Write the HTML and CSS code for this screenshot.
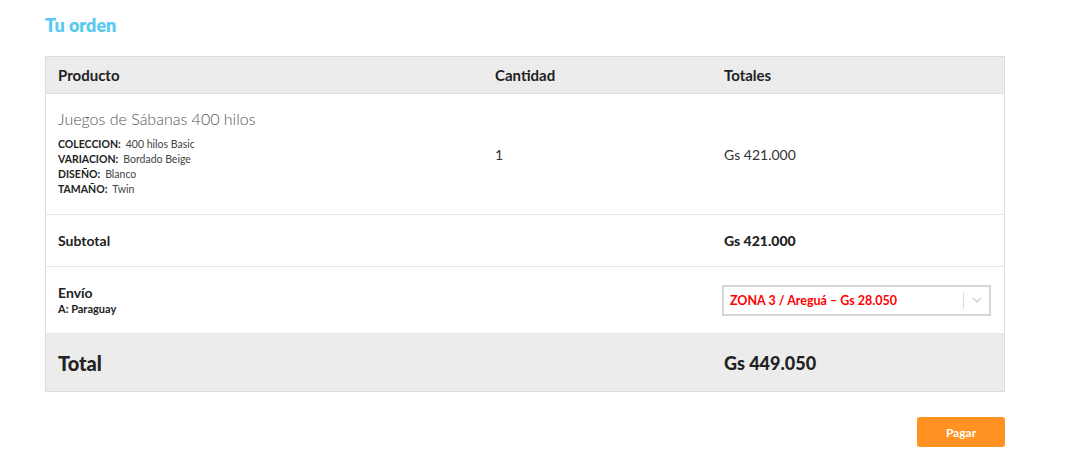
FILE: index.html
```html
<!DOCTYPE html>
<html lang="es">
<head>
  <meta charset="UTF-8">
  <title>Tu orden</title>
  <link rel="stylesheet" href="styles.css">
</head>
<body>
  <div class="order">
    <h3 class="order-title">Tu orden</h3>
    <table class="order-table">
      <thead>
        <tr>
          <th class="col-product">Producto</th>
          <th class="col-qty">Cantidad</th>
          <th class="col-total">Totales</th>
        </tr>
      </thead>
      <tbody>
        <tr class="item-row">
          <td>
            <div class="item-name">Juegos de Sábanas 400 hilos</div>
            <dl class="item-meta">
              <div><dt>COLECCION:</dt> <dd>400 hilos Basic</dd></div>
              <div><dt>VARIACION:</dt> <dd>Bordado Beige</dd></div>
              <div><dt>DISEÑO:</dt> <dd>Blanco</dd></div>
              <div><dt>TAMAÑO:</dt> <dd>Twin</dd></div>
            </dl>
          </td>
          <td>1</td>
          <td>Gs 421.000</td>
        </tr>
        <tr class="subtotal-row">
          <th>Subtotal</th>
          <td></td>
          <td><strong>Gs 421.000</strong></td>
        </tr>
        <tr class="shipping-row">
          <th>
            <div class="ship-label">Envío</div>
            <div class="ship-dest">A: Paraguay</div>
          </th>
          <td></td>
          <td>
            <div class="ship-select">
              <span class="ship-value">ZONA 3 / Areguá – Gs 28.050</span>
              <span class="ship-arrow">
                <svg width="10" height="6" viewBox="0 0 10 6"><path d="M1 1 L5 5 L9 1" fill="none" stroke="#c8c8c8" stroke-width="1.2"/></svg>
              </span>
            </div>
          </td>
        </tr>
      </tbody>
      <tfoot>
        <tr class="total-row">
          <th>Total</th>
          <td></td>
          <td><strong>Gs 449.050</strong></td>
        </tr>
      </tfoot>
    </table>
    <div class="order-actions">
      <button class="pay-btn">Pagar</button>
    </div>
  </div>
</body>
</html>
```

FILE: styles.css
```css
body { margin: 0; font-family: Lato, 'Open Sans', sans-serif; color: #333; background: #fff; }
.order { width: 960px; padding: 14px 0 0 45px; }
.order-title { margin: 0 0 20px; font-size: 18px; font-weight: 800; color: #5bc9ef; line-height: 22px; }
.order-table { width: 960px; border-collapse: collapse; border: 1px solid #dcdcdc; table-layout: fixed; }
.order-table th, .order-table td { text-align: left; padding: 0 12px; vertical-align: middle; }
.order-table thead th { background: #ececec; height: 36px; font-size: 15px; font-weight: 700; color: #222; border-bottom: 1px solid #e2e2e2; }
.col-product { width: 413px; }
.col-qty { width: 205px; }
.order-table tbody tr { border-bottom: 1px solid #e6e6e6; }
.item-row td { font-size: 14px; color: #333; height: 120px; }
.item-name { font-size: 16px; font-weight: 300; color: #555; margin: 0 0 9px; }
.item-meta { margin: 0 0 2px; font-size: 10.5px; line-height: 15px; }
.item-meta div { display: flex; gap: 5px; }
.item-meta dt { font-weight: 700; color: #222; }
.item-meta dd { margin: 0; color: #444; }
.subtotal-row th, .subtotal-row td { height: 51px; font-size: 14px; font-weight: 700; color: #222; }
.shipping-row th, .shipping-row td { height: 66px; }
.ship-label { font-size: 14px; font-weight: 700; color: #222; line-height: 17px; }
.ship-dest { font-size: 11px; font-weight: 700; color: #222; line-height: 15px; }
.ship-select { box-sizing: border-box; width: 269px; height: 31px; margin-left: -2px; border: 2px solid #d6d6d6; display: flex; align-items: center; justify-content: space-between; padding-left: 6px; }
.ship-value { font-size: 12.5px; font-weight: 700; color: #f00; }
.ship-arrow { width: 25px; height: 17px; border-left: 1px solid #dcdcdc; display: flex; align-items: center; justify-content: center; }
.total-row th, .total-row td { background: #ececec; height: 57px; }
.total-row th { font-size: 20px; font-weight: 900; color: #222; }
.total-row td strong { font-size: 18px; font-weight: 900; color: #222; }
.order-actions { width: 960px; display: flex; justify-content: flex-end; margin-top: 25px; }
.pay-btn { width: 88px; height: 30px; background: #ff9220; border: none; border-radius: 3px; color: #fff; font-family: inherit; font-size: 12px; font-weight: 700; }
```
